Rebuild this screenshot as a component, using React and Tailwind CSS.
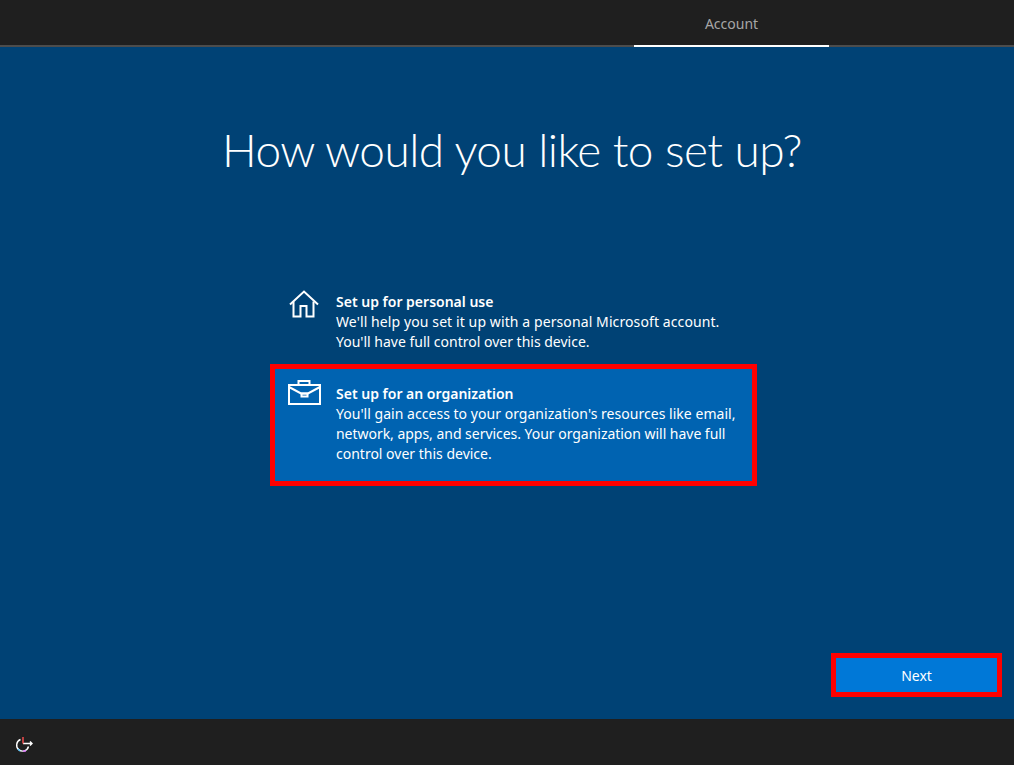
export default function App() {
  return (
    <div className="w-[1014px] h-[765px] flex flex-col bg-[#004275] text-white overflow-hidden font-['Noto_Sans','Open_Sans',sans-serif]">
      {/* top bar */}
      <div className="h-[47px] shrink-0 bg-[#1f1f1f] border-b-2 border-[#4c4c4c] flex justify-end pr-[185px]">
        <div className="w-[195px] h-[47px] border-b-2 border-white flex items-center justify-center pt-[1px] text-[14px] text-[#a6a6a6]">
          Account
        </div>
      </div>

      {/* main */}
      <div className="flex-1 flex flex-col">
        <h1 className="text-center text-[46px] leading-[60px] font-light mt-[73px] pl-[10px] tracking-[-0.55px] font-['Lato',sans-serif]">
          How would you like to set up?
        </h1>

        <div className="w-[487px] ml-[270px] mt-[107px] text-[14px] leading-[20px]">
          <div className="flex h-[77px] pl-[19px] pt-[5px]">
            <div className="w-[47px] shrink-0">
              <svg width="30" height="28" viewBox="0 0 30 28" fill="none" stroke="white" strokeWidth="2" className="mt-[-2px]">
                <path d="M1 14.500 15 1.500l14 13" />
                <path d="M4.500 11.500v15h7v-10.500h6v10.500h7v-15" />
              </svg>
            </div>
            <div>
              <div className="font-semibold">Set up for personal use</div>
              <div className="tracking-[0.1px]">We'll help you set it up with a personal Microsoft account.</div>
              <div>You'll have full control over this device.</div>
            </div>
          </div>

          <div className="flex h-[122px] border-[5px] border-[#ff0000] bg-[#0063b1] pl-[13px] pt-[15px]">
            <div className="w-[48px] shrink-0">
              <svg width="33" height="25" viewBox="0 0 33 25" fill="none" stroke="white" strokeWidth="2" className="mt-[-4px]">
                <path d="M1 5h31v19H1z" />
                <path d="M10.500 5V1h11v4" />
                <path d="M1 7l12 6.500h7L32 7" />
                <path d="M13.500 13.500h6v3h-6z" />
              </svg>
            </div>
            <div>
              <div className="font-semibold">Set up for an organization</div>
              <div className="tracking-[0.03px]">You'll gain access to your organization's resources like email,</div>
              <div className="tracking-[-0.03px]">network, apps, and services. Your organization will have full</div>
              <div>control over this device.</div>
            </div>
          </div>
        </div>

        <div className="mt-auto mb-[22px] pr-[12px] flex justify-end">
          <button className="w-[171px] h-[44px] border-[5px] border-[#ff0000] bg-[#0078d7] text-[14px] text-white">
            Next
          </button>
        </div>
      </div>

      {/* footer */}
      <div className="h-[46px] shrink-0 bg-[#1f1f1f] flex items-center pl-[15px]">
        <svg width="18" height="18" viewBox="0 0 18 18" fill="none" strokeWidth="1.4" className="mt-[6px]">
          <path d="M5.500 3.500a6 6 0 1 0 8 7" stroke="white" />
          <path d="M8 7.500h9M15 5.500l2 2-2 2" stroke="white" />
          <path d="M8 1v6.500" stroke="#ff5050" />
          <path d="M3 13l2 2" stroke="#5ac8ff" />
          <path d="M8 15h3" stroke="#e070ff" />
        </svg>
      </div>
    </div>
  );
}
